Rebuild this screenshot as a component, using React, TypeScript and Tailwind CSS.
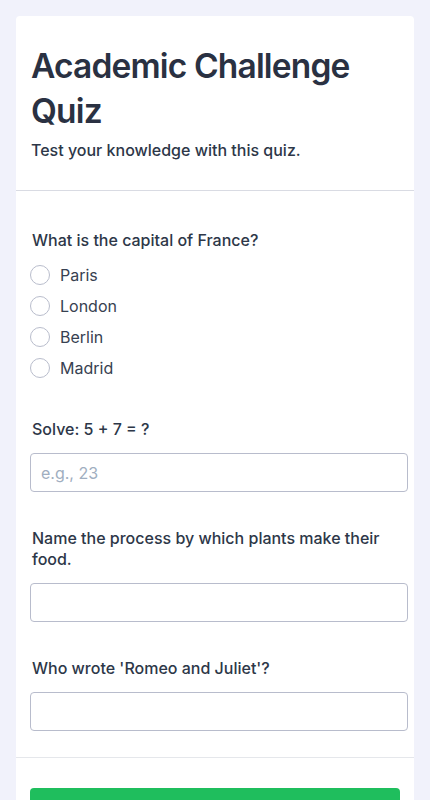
import { useState } from 'react';

type Question =
  | { id: string; kind: 'choice'; prompt: string; options: string[] }
  | { id: string; kind: 'text'; prompt: string; placeholder?: string };

const questions: Question[] = [
  { id: 'q1', kind: 'choice', prompt: 'What is the capital of France?', options: ['Paris', 'London', 'Berlin', 'Madrid'] },
  { id: 'q2', kind: 'text', prompt: 'Solve: 5 + 7 = ?', placeholder: 'e.g., 23' },
  { id: 'q3', kind: 'text', prompt: 'Name the process by which plants make their food.' },
  { id: 'q4', kind: 'text', prompt: "Who wrote 'Romeo and Juliet'?" },
];

export default function App() {
  const [answers, setAnswers] = useState<Record<string, string>>({});

  function setAnswer(id: string, value: string) {
    setAnswers((a) => ({ ...a, [id]: value }));
  }

  return (
    <div
      className="min-h-screen bg-[#f1f2fb] px-4 pt-4 pb-8"
      style={{ fontFamily: 'Inter, "Noto Sans", sans-serif' }}
    >
      <div className="bg-white rounded-[4px] overflow-hidden">
        <div className="pl-[15px] pr-4 pt-7 pb-7 border-b border-[#d9dbe3]">
          <h1 className="text-[33.5px] leading-[45px] font-semibold tracking-tight text-[#2a3142]">
            Academic Challenge Quiz
          </h1>
          <p className="mt-1 text-base leading-6 font-medium text-[#2d3748]">Test your knowledge with this quiz.</p>
        </div>

        <form className="px-[14px] pt-[39px] pb-[26px] border-b border-[#e5e7eb] flex flex-col gap-9">
          {questions.map((q) => (
            <div key={q.id}>
              <label
                className={`block px-0.5 text-base leading-[21px] font-medium text-[#2d3748] ${
                  q.kind === 'choice' ? 'mb-2' : 'mb-[13px]'
                }`}
              >
                {q.prompt}
              </label>
              {q.kind === 'choice' ? (
                <div className="flex flex-col">
                  {q.options.map((opt) => (
                    <label key={opt} className="h-[31px] flex items-center gap-2.5 cursor-pointer">
                      <input
                        type="radio"
                        name={q.id}
                        value={opt}
                        checked={answers[q.id] === opt}
                        onChange={() => setAnswer(q.id, opt)}
                        className="appearance-none w-5 h-5 rounded-full border border-[#b9bdcc] bg-white checked:border-[6px] checked:border-[#1fbe5d]"
                      />
                      <span className="text-base text-[#374151]">{opt}</span>
                    </label>
                  ))}
                </div>
              ) : (
                <input
                  type="text"
                  value={answers[q.id] ?? ''}
                  onChange={(e) => setAnswer(q.id, e.target.value)}
                  placeholder={q.placeholder}
                  className="block w-[378px] h-[39px] px-2.5 rounded-[4px] border border-[#b8bccc] text-base text-[#2d3748] placeholder:text-[#a0aec0] outline-none"
                />
              )}
            </div>
          ))}
        </form>

        <div className="px-[14px] pt-[30px] pb-7">
          <button
            type="button"
            className="w-full h-12 rounded-[4px] bg-[#1fbe5d] text-white text-base font-semibold"
          >
            Submit Quiz
          </button>
        </div>
      </div>
    </div>
  );
}
